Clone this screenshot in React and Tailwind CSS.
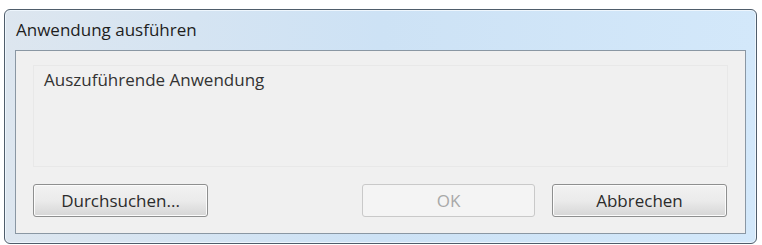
import React from 'react';

// Windows 7 style "run application" dialog
function DialogButton({ children, disabled = false, className = '' }) {
  return (
    <button
      disabled={disabled}
      className={
        'h-[33px] rounded-[3px] border text-[17px] leading-none ' +
        (disabled
          ? 'border-[#c9c9c9] bg-[#f4f4f4] text-[#a8a8a8] '
          : 'border-[#8e8f8f] bg-gradient-to-b from-[#f2f2f2] via-[#ebebeb] to-[#d6d6d6] text-[#2b2b2b] shadow-[inset_0_0_0_1px_#fcfcfc] ') +
        className
      }
    >
      {children}
    </button>
  );
}

export default function App() {
  return (
    <div
      className="w-[762px] h-[245px] bg-white pt-[9px] pl-[4px]"
      style={{ fontFamily: '"Open Sans", "Noto Sans", sans-serif' }}
    >
      {/* Window frame */}
      <div className="w-[753px] h-[235px] rounded-[6px] border border-[#4f5d6b] bg-gradient-to-r from-[#dde6ef] via-[#cde2f5] to-[#d3e8fa] flex flex-col shadow-[inset_0_0_0_1px_#eef6fd]">
        {/* Title bar */}
        <div className="h-[40px] flex items-center pl-[11px] text-[17px] text-[#1e1e1e]">
          Anwendung ausführen
        </div>

        {/* Client area */}
        <div className="mx-[10px] mb-[9px] flex-1 border border-[#8a97a3] bg-[#f0f0f0] flex flex-col px-[17px] pt-[14px]">
          <div className="h-[102px] border border-[#e8e8e8] pl-[10px] pt-[1px] text-[17px] text-[#333333]">
            Auszuführende Anwendung
          </div>

          <div className="mt-[17px] flex items-center">
            <DialogButton className="w-[175px]">Durchsuchen...</DialogButton>
            <DialogButton disabled className="ml-auto w-[173px]">OK</DialogButton>
            <DialogButton className="ml-[17px] mr-[1px] w-[175px]">Abbrechen</DialogButton>
          </div>
        </div>
      </div>
    </div>
  );
}
